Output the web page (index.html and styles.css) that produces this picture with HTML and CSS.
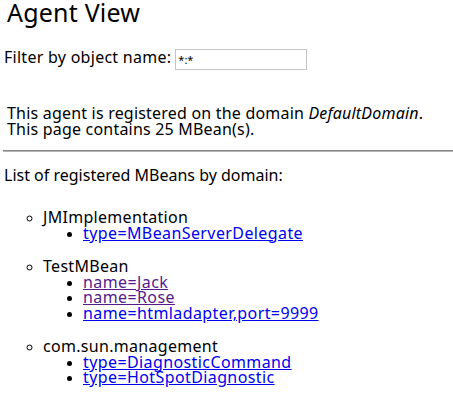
FILE: index.html
```html
<!DOCTYPE html>
<html>
<head>
<meta charset="utf-8">
<title>Agent View</title>
<link rel="stylesheet" href="styles.css">
</head>
<body>
<h1 class="title">Agent View</h1>
<form class="filter">
  <label class="filter-label" for="q">Filter by object name:</label>
  <input class="filter-input" id="q" type="text" value="*:*">
</form>
<p class="info">This agent is registered on the domain <em>DefaultDomain</em>.<br>This page contains 25 MBean(s).</p>
<hr class="rule">
<p class="intro">List of registered MBeans by domain:</p>
<ul class="domains">
  <li class="domain">JMImplementation
    <ul class="beans">
      <li><a class="link" href="#">type=MBeanServerDelegate</a></li>
    </ul>
  </li>
  <li class="domain">TestMBean
    <ul class="beans">
      <li><a class="link visited" href="#">name=Jack</a></li>
      <li><a class="link visited" href="#">name=Rose</a></li>
      <li><a class="link" href="#">name=htmladapter,port=9999</a></li>
    </ul>
  </li>
  <li class="domain">com.sun.management
    <ul class="beans">
      <li><a class="link" href="#">type=DiagnosticCommand</a></li>
      <li><a class="link" href="#">type=HotSpotDiagnostic</a></li>
    </ul>
  </li>
</ul>
</body>
</html>
```
FILE: styles.css
```css
html, body {
  margin: 0;
  padding: 0;
  background: #fff;
}
body {
  padding-left: 4px;
  font-family: "Noto Sans", sans-serif;
  font-size: 16px;
  color: #000;
}
.title {
  margin: 0;
  padding-left: 3px;
  font-size: 25px;
  font-weight: normal;
  line-height: 24px;
  letter-spacing: 0.2px;
}
.filter {
  display: flex;
  align-items: flex-start;
  gap: 4px;
  margin: 25px 0 0;
}
.filter-label {
  line-height: 16px;
  letter-spacing: 0.27px;
}
.filter-input {
  box-sizing: border-box;
  width: 132px;
  height: 21px;
  margin: 0;
  padding: 0 2px;
  border: 1px solid #c4c4c4;
  font-family: "Noto Sans", sans-serif;
  font-size: 11px;
  color: #000;
  outline: none;
}
.info {
  margin: 35px 0 0;
  padding-left: 3px;
  line-height: 16px;
  letter-spacing: 0.2px;
}
.rule {
  margin: 13px 0 0 -1px;
  height: 0;
  border: 0;
  border-top: 1px solid #888;
  border-bottom: 1px solid #b4b4b4;
}
.intro {
  margin: 15px 0 0;
  line-height: 16px;
}
.domains {
  margin: 27px 0 0;
  padding-left: 39px;
  list-style: circle;
  line-height: 15.5px;
}
.domains ::marker {
  font-size: 13px;
}
.domain {
  margin-bottom: 18px;
  letter-spacing: 0.3px;
}
.beans {
  margin: 0;
  padding-left: 40px;
  list-style: disc;
}
.link {
  color: #0000ee;
  text-decoration: underline;
  letter-spacing: 0.4px;
}
.link.visited {
  color: #551a8b;
}
```
